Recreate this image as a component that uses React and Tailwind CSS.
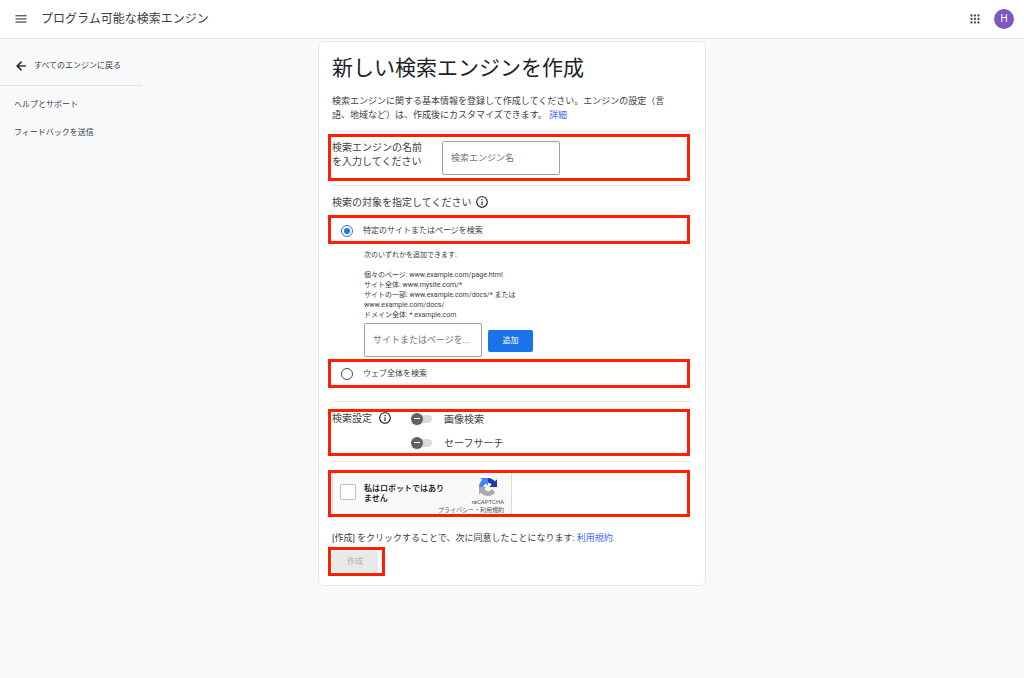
import React from "react";

function MenuIcon() {
  return (
    <svg viewBox="0 0 12 12" className="size-3" fill="#5f6368" aria-hidden="true">
      <rect x="0.5" y="2" width="11" height="1.4" />
      <rect x="0.5" y="5.2" width="11" height="1.4" />
      <rect x="0.5" y="8.4" width="11" height="1.4" />
    </svg>
  );
}

function AppsIcon() {
  return (
    <svg viewBox="0 0 24 24" className="size-3.5" fill="#4f5358" aria-hidden="true">
      <path d="M6,8c1.1,0 2,-0.9 2,-2s-0.9,-2 -2,-2 -2,0.9 -2,2 0.9,2 2,2zM12,20c1.1,0 2,-0.9 2,-2s-0.9,-2 -2,-2 -2,0.9 -2,2 0.9,2 2,2zM6,20c1.1,0 2,-0.9 2,-2s-0.9,-2 -2,-2 -2,0.9 -2,2 0.9,2 2,2zM6,14c1.1,0 2,-0.9 2,-2s-0.9,-2 -2,-2 -2,0.9 -2,2 0.9,2 2,2zM12,14c1.1,0 2,-0.9 2,-2s-0.9,-2 -2,-2 -2,0.9 -2,2 0.9,2 2,2zM16,6c0,1.1 0.9,2 2,2s2,-0.9 2,-2 -0.9,-2 -2,-2 -2,0.9 -2,2zM12,8c1.1,0 2,-0.9 2,-2s-0.9,-2 -2,-2 -2,0.9 -2,2 0.9,2 2,2zM18,14c1.1,0 2,-0.9 2,-2s-0.9,-2 -2,-2 -2,0.9 -2,2 0.9,2 2,2zM18,20c1.1,0 2,-0.9 2,-2s-0.9,-2 -2,-2 -2,0.9 -2,2 0.9,2 2,2z" />
    </svg>
  );
}

function BackIcon() {
  return (
    <svg viewBox="0 0 24 24" className="size-3.5" fill="#202124" stroke="#202124" strokeWidth="0.6" aria-hidden="true">
      <path d="M20 11H7.83l5.59-5.59L12 4l-8 8 8 8 1.41-1.41L7.83 13H20v-2z" />
    </svg>
  );
}

function InfoButton({ label }) {
  return (
    <button type="button" aria-label={label}>
      <svg viewBox="0 0 24 24" className="size-3.5" fill="#202124" aria-hidden="true">
        <path d="M11 7h2v2h-2zm0 4h2v6h-2zm1-9C6.48 2 2 6.48 2 12s4.48 10 10 10 10-4.48 10-10S17.52 2 12 2zm0 18c-4.41 0-8-3.59-8-8s3.59-8 8-8 8 3.59 8 8-3.59 8-8 8z" />
      </svg>
    </button>
  );
}

function RecaptchaLogo() {
  return (
    <svg viewBox="0 0 64 64" className="size-[18px]" aria-hidden="true">
      <path fill="#1c3aa9" d="M64 31.955l-.033-1.37V4.687l-7.16 7.16C50.948 4.674 42.033.093 32.05.093c-10.4 0-19.622 4.96-25.458 12.64l11.736 11.86a15.55 15.55 0 0 1 4.754-5.334c2.05-1.6 4.952-2.906 8.968-2.906.485 0 .86.057 1.135.163 4.976.393 9.288 3.14 11.828 7.124l-8.307 8.307L64 31.953" />
      <path fill="#4285f4" d="M31.862.094l-1.37.033H4.594l7.16 7.16C4.58 13.147 0 22.06 0 32.046c0 10.4 4.96 19.622 12.64 25.458L24.5 45.768a15.55 15.55 0 0 1-5.334-4.754c-1.6-2.05-2.906-4.952-2.906-8.968 0-.485.057-.86.163-1.135.393-4.976 3.14-9.288 7.124-11.828l8.307 8.307L31.86.095" />
      <path fill="#ababab" d="M.001 32.045l.033 1.37v25.898l7.16-7.16c5.86 7.173 14.774 11.754 24.76 11.754 10.4 0 19.622-4.96 25.458-12.64l-11.736-11.86a15.55 15.55 0 0 1-4.754 5.334c-2.05 1.6-4.952 2.906-8.968 2.906-.485 0-.86-.057-1.135-.163-4.976-.393-9.288-3.14-11.828-7.124l8.307-8.307c-10.522.04-22.4.066-27.295-.005" />
    </svg>
  );
}

function Highlight({ className, children }) {
  return <div className={`-ml-1 mr-px border-[3px] border-[#ff1f00] ${className}`}>{children}</div>;
}

function Divider({ className }) {
  return <hr className={`border-t border-[#e4e5e8] ${className}`} />;
}

function ScopeOption({ id, label, defaultChecked }) {
  return (
    <div className="flex h-full items-center gap-2.5">
      <input
        id={id}
        type="radio"
        name="scope"
        defaultChecked={defaultChecked}
        className="grid size-3 appearance-none place-items-center rounded-full border border-[#4a4e52] before:size-1.5 before:rounded-full checked:border-[#1a73e8] checked:before:bg-[#1a73e8]"
      />
      <label htmlFor={id} className="text-[8px] text-[#3c4043]">
        {label}
      </label>
    </div>
  );
}

function SettingSwitch({ id, label }) {
  return (
    <div className="flex h-3.5 items-center gap-3">
      <input
        id={id}
        type="checkbox"
        role="switch"
        className="relative h-2 w-5 appearance-none rounded-full bg-[#dadce0] before:absolute before:-left-px before:-top-0.5 before:size-3 before:rounded-full before:bg-[#5f6368] before:shadow-sm after:absolute after:left-0.5 after:top-[3px] after:h-px after:w-1.5 after:bg-white"
      />
      <label htmlFor={id} className="text-[10px] text-[#3c4043]">
        {label}
      </label>
    </div>
  );
}

export default function App() {
  return (
    <div className="min-h-screen bg-[#f9fafc] font-[Roboto,'Noto_Sans_CJK_JP',sans-serif] text-[#3c4043]">
      <header className="flex h-[39px] items-center border-b border-[#e2e4e8] bg-white pl-[15px] pr-2.5">
        <button type="button" aria-label="メニュー">
          <MenuIcon />
        </button>
        <h1 className="ml-3.5 flex-1 text-[12px] leading-4">プログラム可能な検索エンジン</h1>
        <button type="button" aria-label="アプリ" className="mr-3">
          <AppsIcon />
        </button>
        <button type="button" aria-label="アカウント" className="size-5 rounded-full bg-[#7e57c2] text-[10px] leading-5 text-white">
          H
        </button>
      </header>

      <div className="grid grid-cols-[1fr_388px_1fr] items-stretch bg-[#f7f9fb]">
        <nav className="w-[142px] text-[8px] leading-3">
          <a href="#engines" className="flex h-[47px] items-center gap-1.5 border-b border-[#e2e4e8] pl-3.5 pt-2">
            <BackIcon />
            すべてのエンジンに戻る
          </a>
          <a href="#help" className="mt-[13px] block pl-3.5">
            ヘルプとサポート
          </a>
          <a href="#feedback" className="mt-4 block pl-3.5">
            フィードバックを送信
          </a>
        </nav>

        <main className="mt-0.5 rounded-md border border-[#e6e8eb] bg-white pb-[9px] pl-[13px] pr-3.5 pt-2.5">
          <h2 className="text-[21px] leading-8 text-[#202124]">新しい検索エンジンを作成</h2>
          <p className="mt-2.5 text-[9px] leading-[14px]">
            検索エンジンに関する基本情報を登録して作成してください。エンジンの設定（言
            <br />
            語、地域など）は、作成後にカスタマイズできます。{" "}
            <a href="#details" className="text-[#3b6cff]">
              詳細
            </a>
          </p>

          <Divider className="mt-[9px]" />
          <Highlight className="mt-0.5 flex h-[47px] items-start pl-px pt-1">
            <label htmlFor="engine-name" className="w-[110px] text-[10px] leading-[14px]">
              検索エンジンの名前
              <br />
              を入力してください
            </label>
            <input
              id="engine-name"
              type="text"
              placeholder="検索エンジン名"
              className="h-[34px] w-[118px] rounded-xs border border-[#9aa0a6] px-2 text-[9px] placeholder:text-[#70757a]"
            />
          </Highlight>
          <Divider className="mt-1" />

          <div className="mt-[9px] flex h-3.5 items-center gap-1 text-[10px]">
            <h3>検索の対象を指定してください</h3>
            <InfoButton label="検索の対象の説明" />
          </div>

          <Highlight className="mt-1.5 h-[29px] pl-2.5 pt-0.5">
            <ScopeOption id="scope-sites" label="特定のサイトまたはページを検索" defaultChecked />
          </Highlight>

          <div className="ml-8 mt-1.5">
            <p className="text-[7px] leading-[10px]">
              次のいずれかを追加できます:
              <br />
              <br />
              個々のページ: www.example.com/page.html
              <br />
              サイト全体: www.mysite.com/*
              <br />
              サイトの一部: www.example.com/docs/* または
              <br />
              www.example.com/docs/
              <br />
              ドメイン全体: *.example.com
            </p>
            <div className="mt-[3px] flex items-end gap-1.5">
              <input
                type="text"
                aria-label="サイトまたはページ"
                placeholder="サイトまたはページを..."
                className="h-[34px] w-[118px] rounded-xs border border-[#9aa0a6] px-2 text-[9px] placeholder:text-[#70757a]"
              />
              <button type="button" className="mb-[5px] h-[22px] w-[45px] rounded-xs bg-[#1a73e8] text-[8px] text-white">
                追加
              </button>
            </div>
          </div>

          <Highlight className="mt-0.5 h-[29px] pl-2.5">
            <ScopeOption id="scope-web" label="ウェブ全体を検索" />
          </Highlight>

          <Divider className="mt-[13px]" />
          <Highlight className="mt-[7px] flex h-[47px] items-start pl-px">
            <div className="flex h-3 w-20 items-center gap-1.5 text-[10px]">
              <h3>検索設定</h3>
              <InfoButton label="検索設定の説明" />
            </div>
            <div className="flex flex-col gap-2.5">
              <SettingSwitch id="image-search" label="画像検索" />
              <SettingSwitch id="safe-search" label="セーフサーチ" />
            </div>
          </Highlight>
          <Divider className="mt-[5px]" />

          <Highlight className="mt-2 h-[47px] pl-px">
            <div className="flex h-full w-[180px] items-start justify-between border-x border-[#dcdcdc] bg-[#f9f9f9] px-[7px]">
              <div className="flex items-start gap-2 pt-[11px]">
                <input id="robot" type="checkbox" className="size-4 shrink-0 appearance-none rounded-xs border border-[#c1c1c1] bg-white" />
                <label htmlFor="robot" className="whitespace-nowrap text-[8px] font-medium leading-[10px] text-black">
                  私はロボットではあり
                  <br />
                  ません
                </label>
              </div>
              <div className="flex w-8 flex-col items-end pt-[5px] text-[6px] leading-2 text-[#555]">
                <div className="flex w-full flex-col items-center gap-0.5">
                  <RecaptchaLogo />
                  <span>reCAPTCHA</span>
                </div>
                <div className="whitespace-nowrap">
                  <a href="#privacy">プライバシー</a>・<a href="#recaptcha-terms">利用規約</a>
                </div>
              </div>
            </div>
          </Highlight>

          <p className="mt-3.5 text-[9px] leading-[14px]">
            [作成] をクリックすることで、次に同意したことになります:{" "}
            <a href="#terms" className="text-[#3b6cff]">
              利用規約
            </a>
            .
          </p>
          <Highlight className="mt-0.5 w-[57px] p-px">
            <button type="button" disabled className="block h-[21px] w-[46px] rounded-xs bg-[#e8eaea] text-[8px] text-[#a8abad]">
              作成
            </button>
          </Highlight>
        </main>
      </div>
    </div>
  );
}
